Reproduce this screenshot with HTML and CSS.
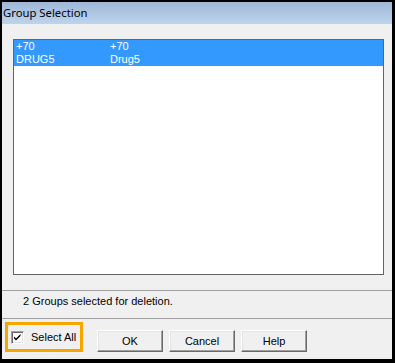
FILE: index.html
```html
<!DOCTYPE html>
<html lang="en">

<head>
  <meta charset="UTF-8">
  <title>Group Selection</title>
  <link rel="stylesheet" href="styles.css">
</head>

<body>
  <div class="win">
    <div class="title">Group Selection</div>

    <div class="list-wrap">
      <div class="list">
        <div class="row selected">
          <span>+70</span><span>+70</span>
          <span>DRUG5</span><span>Drug5</span>
        </div>
      </div>
    </div>

    <div class="status">2 Groups selected for deletion.</div>

    <div class="footer">
      <label class="select-all">
        <span class="check">
          <svg viewBox="0 0 9 9" width="9" height="9">
            <path d="M1 3.5 L3 5.5 L7.5 1 L7.5 3 L3 7.5 L1 5.5 Z" fill="#000" />
          </svg>
        </span>
        Select All
      </label>
      <div class="buttons">
        <button class="btn">OK</button>
        <button class="btn">Cancel</button>
        <button class="btn">Help</button>
      </div>
    </div>
  </div>
</body>

</html>
```

FILE: styles.css
```css
* {
  box-sizing: border-box;
  margin: 0;
  padding: 0
}

body {
  font-family: "Liberation Sans", Arial, sans-serif;
  font-size: 11px;
  color: #000
}

.win {
  width: 395px;
  height: 363px;
  border-style: solid;
  border-color: #000;
  border-width: 2px 3px 4px 2px;
  background: #f0f0f0;
  display: flex;
  flex-direction: column
}

.title {
  height: 22px;
  line-height: 22px;
  padding-left: 1px;
  font-family: "Noto Sans", "Open Sans", sans-serif;
  font-size: 11.3px;
  background: linear-gradient(#9fb8d7, #bdd4ed)
}

.list-wrap {
  padding: 15px 8px 0 11px
}

.list {
  height: 236px;
  background: #fff;
  border: 1px solid #646464
}

.row {
  display: grid;
  grid-template-columns: 94px 1fr;
  line-height: 13px;
  padding-left: 2px
}

.row.selected {
  background: #3399ff;
  color: #fff
}

.status {
  margin-top: 15px;
  height: 28px;
  border-top: 1px solid #a0a0a0;
  padding: 4px 0 0 21px;
  line-height: 13px
}

.footer {
  flex: 1;
  border-top: 1px solid #a0a0a0;
  padding: 3px 0 0 3px;
  display: flex;
  align-items: flex-start
}

.select-all {
  width: 78px;
  height: 30px;
  border: 3px solid #f7a600;
  display: flex;
  align-items: center;
  gap: 7px;
  padding-left: 3px
}

.check {
  width: 13px;
  height: 13px;
  background: #fff;
  border: 1px solid;
  border-color: #a0a0a0 #fff #fff #a0a0a0;
  box-shadow: inset 1px 1px #696969, inset -1px -1px #e3e3e3;
  display: flex;
  align-items: center;
  justify-content: center
}

.check svg {
  display: block
}

.buttons {
  display: flex;
  gap: 6px;
  margin: 8px 0 0 14px
}

.btn {
  width: 66px;
  height: 22px;
  font-family: "Liberation Sans", Arial, sans-serif;
  font-size: 11px;
  color: #000;
  background: #f0f0f0;
  border: 1px solid;
  border-color: #fff #696969 #696969 #fff;
  box-shadow: inset -1px -1px #a0a0a0, inset 1px 1px #e3e3e3
}
```
